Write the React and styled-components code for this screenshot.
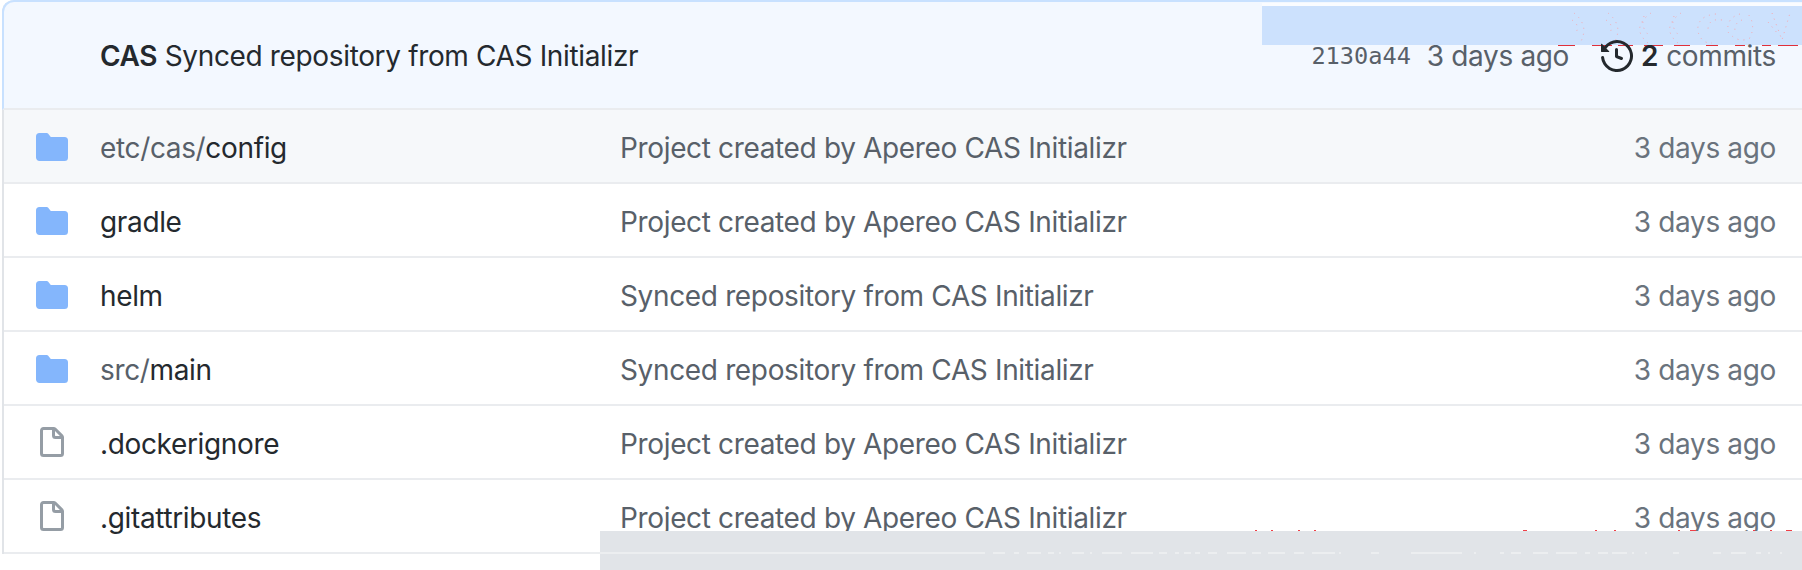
import React from 'react'
import styled, { createGlobalStyle } from 'styled-components'

const GlobalStyle = createGlobalStyle`
  html, body {
    margin: 0;
    padding: 0;
    background: #fff;
    overflow: hidden;
  }
`

const Page = styled.div`
  position: relative;
  width: 1802px;
  height: 570px;
  overflow: hidden;
  font-family: Inter, 'Noto Sans', sans-serif;
  font-size: 28px;
  letter-spacing: -0.35px;
  color: #24292e;
`

const Box = styled.div`
  margin-left: 2px;
  border-left: 2px solid #e1e4e8;
  border-top-left-radius: 12px;
`

const Header = styled.div`
  display: flex;
  align-items: center;
  height: 105px;
  padding: 1px 26px 0 96px;
  background: #f3f8ff;
  border-top: 2px solid #c8e1ff;
  border-bottom: 2px solid #eaecef;
  border-top-left-radius: 12px;
  margin-left: -2px;
  border-left: 2px solid #c8e1ff;
`

const CommitMessage = styled.div`
  flex: 1;
  white-space: nowrap;
  strong {
    font-weight: 600;
  }
`

const Hash = styled.span`
  font-family: 'DejaVu Sans Mono', 'Liberation Mono', monospace;
  font-size: 23.6px;
  letter-spacing: 0;
  color: #586069;
  margin-right: 16px;
`

const Muted = styled.span`
  color: #586069;
`

const Commits = styled.div`
  position: relative;
  z-index: 1;
  display: flex;
  align-items: center;
  margin-left: 32px;
  color: #586069;
  svg {
    margin-right: 8px;
  }
  strong {
    color: #24292e;
    font-weight: 600;
    margin-right: 8px;
  }
`

const Row = styled.div`
  display: flex;
  align-items: center;
  height: 68px;
  padding: 4px 26px 0 32px;
  border-bottom: 2px solid #eaecef;
  background: ${(p) => (p.$active ? '#f6f8fa' : '#fff')};
`

const IconCell = styled.div`
  display: flex;
  width: 64px;
  flex: none;
  margin-top: -2px;
`

const Name = styled.div`
  width: 520px;
  flex: none;
  white-space: nowrap;
`

const Message = styled.div`
  flex: 1;
  color: #586069;
  white-space: nowrap;
`

const Age = styled.div`
  color: #6a737d;
  white-space: nowrap;
`

const BlueStrip = styled.div`
  position: absolute;
  top: 6px;
  left: 1262px;
  right: 0;
  height: 39px;
  background: #cce1fd;
  box-shadow: 0 -3px 0 #fafcff;
`

const GrayStrip = styled.div`
  position: absolute;
  left: 600px;
  right: 0;
  top: 531px;
  height: 39px;
  background: #e1e4e8;
`

const Artifacts = styled.svg`
  position: absolute;
  left: 0;
  top: 0;
  pointer-events: none;
`

const FolderIcon = () => (
  <svg width='32' height='32' viewBox='0 0 16 16' fill='#84b6fc'>
    <path d='M1.75 1A1.75 1.75 0 000 2.75v10.5C0 14.216.784 15 1.75 15h12.5A1.75 1.75 0 0016 13.25v-8.5A1.75 1.75 0 0014.25 3H7.5a.25.25 0 01-.2-.1l-.9-1.2C6.07 1.22 5.55 1 5 1H1.75z' />
  </svg>
)

const FileIcon = () => (
  <svg width='32' height='32' viewBox='0 0 16 16' fill='#959da5'>
    <path
      fillRule='evenodd'
      d='M3.75 1.5a.25.25 0 00-.25.25v11.5c0 .138.112.25.25.25h8.5a.25.25 0 00.25-.25V6H9.75A1.75 1.75 0 018 4.25V1.5H3.75zm5.75.56v2.19c0 .138.112.25.25.25h2.19L9.5 2.06zM2 1.75C2 .784 2.784 0 3.75 0h5.086c.464 0 .909.184 1.237.513l3.414 3.414c.329.328.513.773.513 1.237v8.086A1.75 1.75 0 0112.25 15h-8.5A1.75 1.75 0 012 13.25V1.75z'
    />
  </svg>
)

const HistoryIcon = () => (
  <svg width='32' height='32' viewBox='0 0 16 16' fill='#24292e'>
    <path
      fillRule='evenodd'
      d='M1.643 3.143L.427 1.927A.25.25 0 000 2.104V5.75c0 .138.112.25.25.25h3.646a.25.25 0 00.177-.427L2.715 4.215a6.5 6.5 0 11-1.18 4.458.75.75 0 10-1.493.154 8.001 8.001 0 101.6-5.684zM7.75 4a.75.75 0 01.75.75v2.992l2.028.812a.75.75 0 01-.557 1.392l-2.5-1A.75.75 0 017 8.25v-3.5A.75.75 0 017.75 4z'
    />
  </svg>
)

const rows = [
  { type: 'dir', prefix: 'etc/cas/', name: 'config', message: 'Project created by Apereo CAS Initializr', active: true },
  { type: 'dir', name: 'gradle', message: 'Project created by Apereo CAS Initializr' },
  { type: 'dir', name: 'helm', message: 'Synced repository from CAS Initializr' },
  { type: 'dir', prefix: 'src/', name: 'main', message: 'Synced repository from CAS Initializr' },
  { type: 'file', name: '.dockerignore', message: 'Project created by Apereo CAS Initializr' },
  { type: 'file', name: '.gitattributes', message: 'Project created by Apereo CAS Initializr' },
]

// leftovers of the half-painted page: x ranges of the broken lines
const redDashes = [[1558, 1575], [1592, 1612], [1618, 1633], [1644, 1663], [1674, 1690], [1706, 1718], [1735, 1745], [1762, 1771], [1778, 1798]]
const redTicks = [[1255, 1257], [1271, 1273], [1298, 1300], [1314, 1316], [1523, 1527], [1595, 1597], [1614, 1616], [1678, 1680], [1690, 1696], [1753, 1755], [1770, 1772], [1786, 1792]]
const lightDashes = [
  [590, 985], [993, 1005], [1014, 1019], [1027, 1041], [1048, 1054], [1059, 1061], [1072, 1084], [1090, 1092], [1102, 1122],
  [1131, 1153], [1159, 1167], [1175, 1179], [1184, 1191], [1195, 1200], [1208, 1217], [1227, 1246], [1252, 1261], [1268, 1285],
  [1294, 1304], [1312, 1335], [1339, 1341], [1371, 1379], [1411, 1462], [1474, 1476], [1500, 1504], [1511, 1521], [1533, 1548],
  [1556, 1577], [1585, 1590], [1598, 1608], [1612, 1627], [1632, 1634], [1645, 1647], [1673, 1679], [1713, 1721], [1731, 1746],
  [1756, 1761], [1768, 1770], [1780, 1782],
]

const hLines = (ranges, y) => ranges.map(([a, b]) => `M${a} ${y}H${b}`).join('')

const ghostGlyphs =
  'M1574 13Q1590 26 1580 43M1572 20Q1582 27 1574 34' +
  'M1608 13Q1624 26 1614 43M1606 20Q1616 27 1608 34' +
  'M1651 13Q1630 28 1648 43M1644 16Q1640 28 1650 36' +
  'M1681 13Q1660 28 1678 43M1674 16Q1670 28 1680 36' +
  'M1716 14Q1696 16 1698 32Q1702 44 1712 43M1722 20Q1708 18 1708 30' +
  'M1740 14Q1726 18 1728 32Q1738 44 1750 38Q1756 24 1748 14M1742 20Q1732 24 1736 34' +
  'M1772 13L1782 40L1790 13M1768 22L1778 34'

export default function App() {
  return (
    <Page>
      <GlobalStyle />
      <Box>
        <Header>
          <CommitMessage>
            <strong>CAS</strong> Synced repository from CAS Initializr
          </CommitMessage>
          <Hash>2130a44</Hash>
          <Muted>3 days ago</Muted>
          <Commits>
            <HistoryIcon />
            <strong>2</strong> commits
          </Commits>
        </Header>
        {rows.map((row) => (
          <Row key={row.name} $active={row.active}>
            <IconCell>{row.type === 'dir' ? <FolderIcon /> : <FileIcon />}</IconCell>
            <Name>
              {row.prefix && <Muted>{row.prefix}</Muted>}
              {row.name}
            </Name>
            <Message>{row.message}</Message>
            <Age>3 days ago</Age>
          </Row>
        ))}
      </Box>
      <BlueStrip />
      <GrayStrip />
      <Artifacts width='1802' height='570' viewBox='0 0 1802 570' fill='none'>
        <path d={ghostGlyphs} stroke='#f7a8b0' strokeWidth='1' strokeDasharray='1 5' />
        <path d={hLines(redDashes, 45.5)} stroke='#e0303a' strokeWidth='1' />
        <path d={hLines(redTicks, 530.5)} stroke='#f04048' strokeWidth='1' />
        <path d={hLines(lightDashes, 553)} stroke='#eceef0' strokeWidth='2' />
      </Artifacts>
    </Page>
  )
}
